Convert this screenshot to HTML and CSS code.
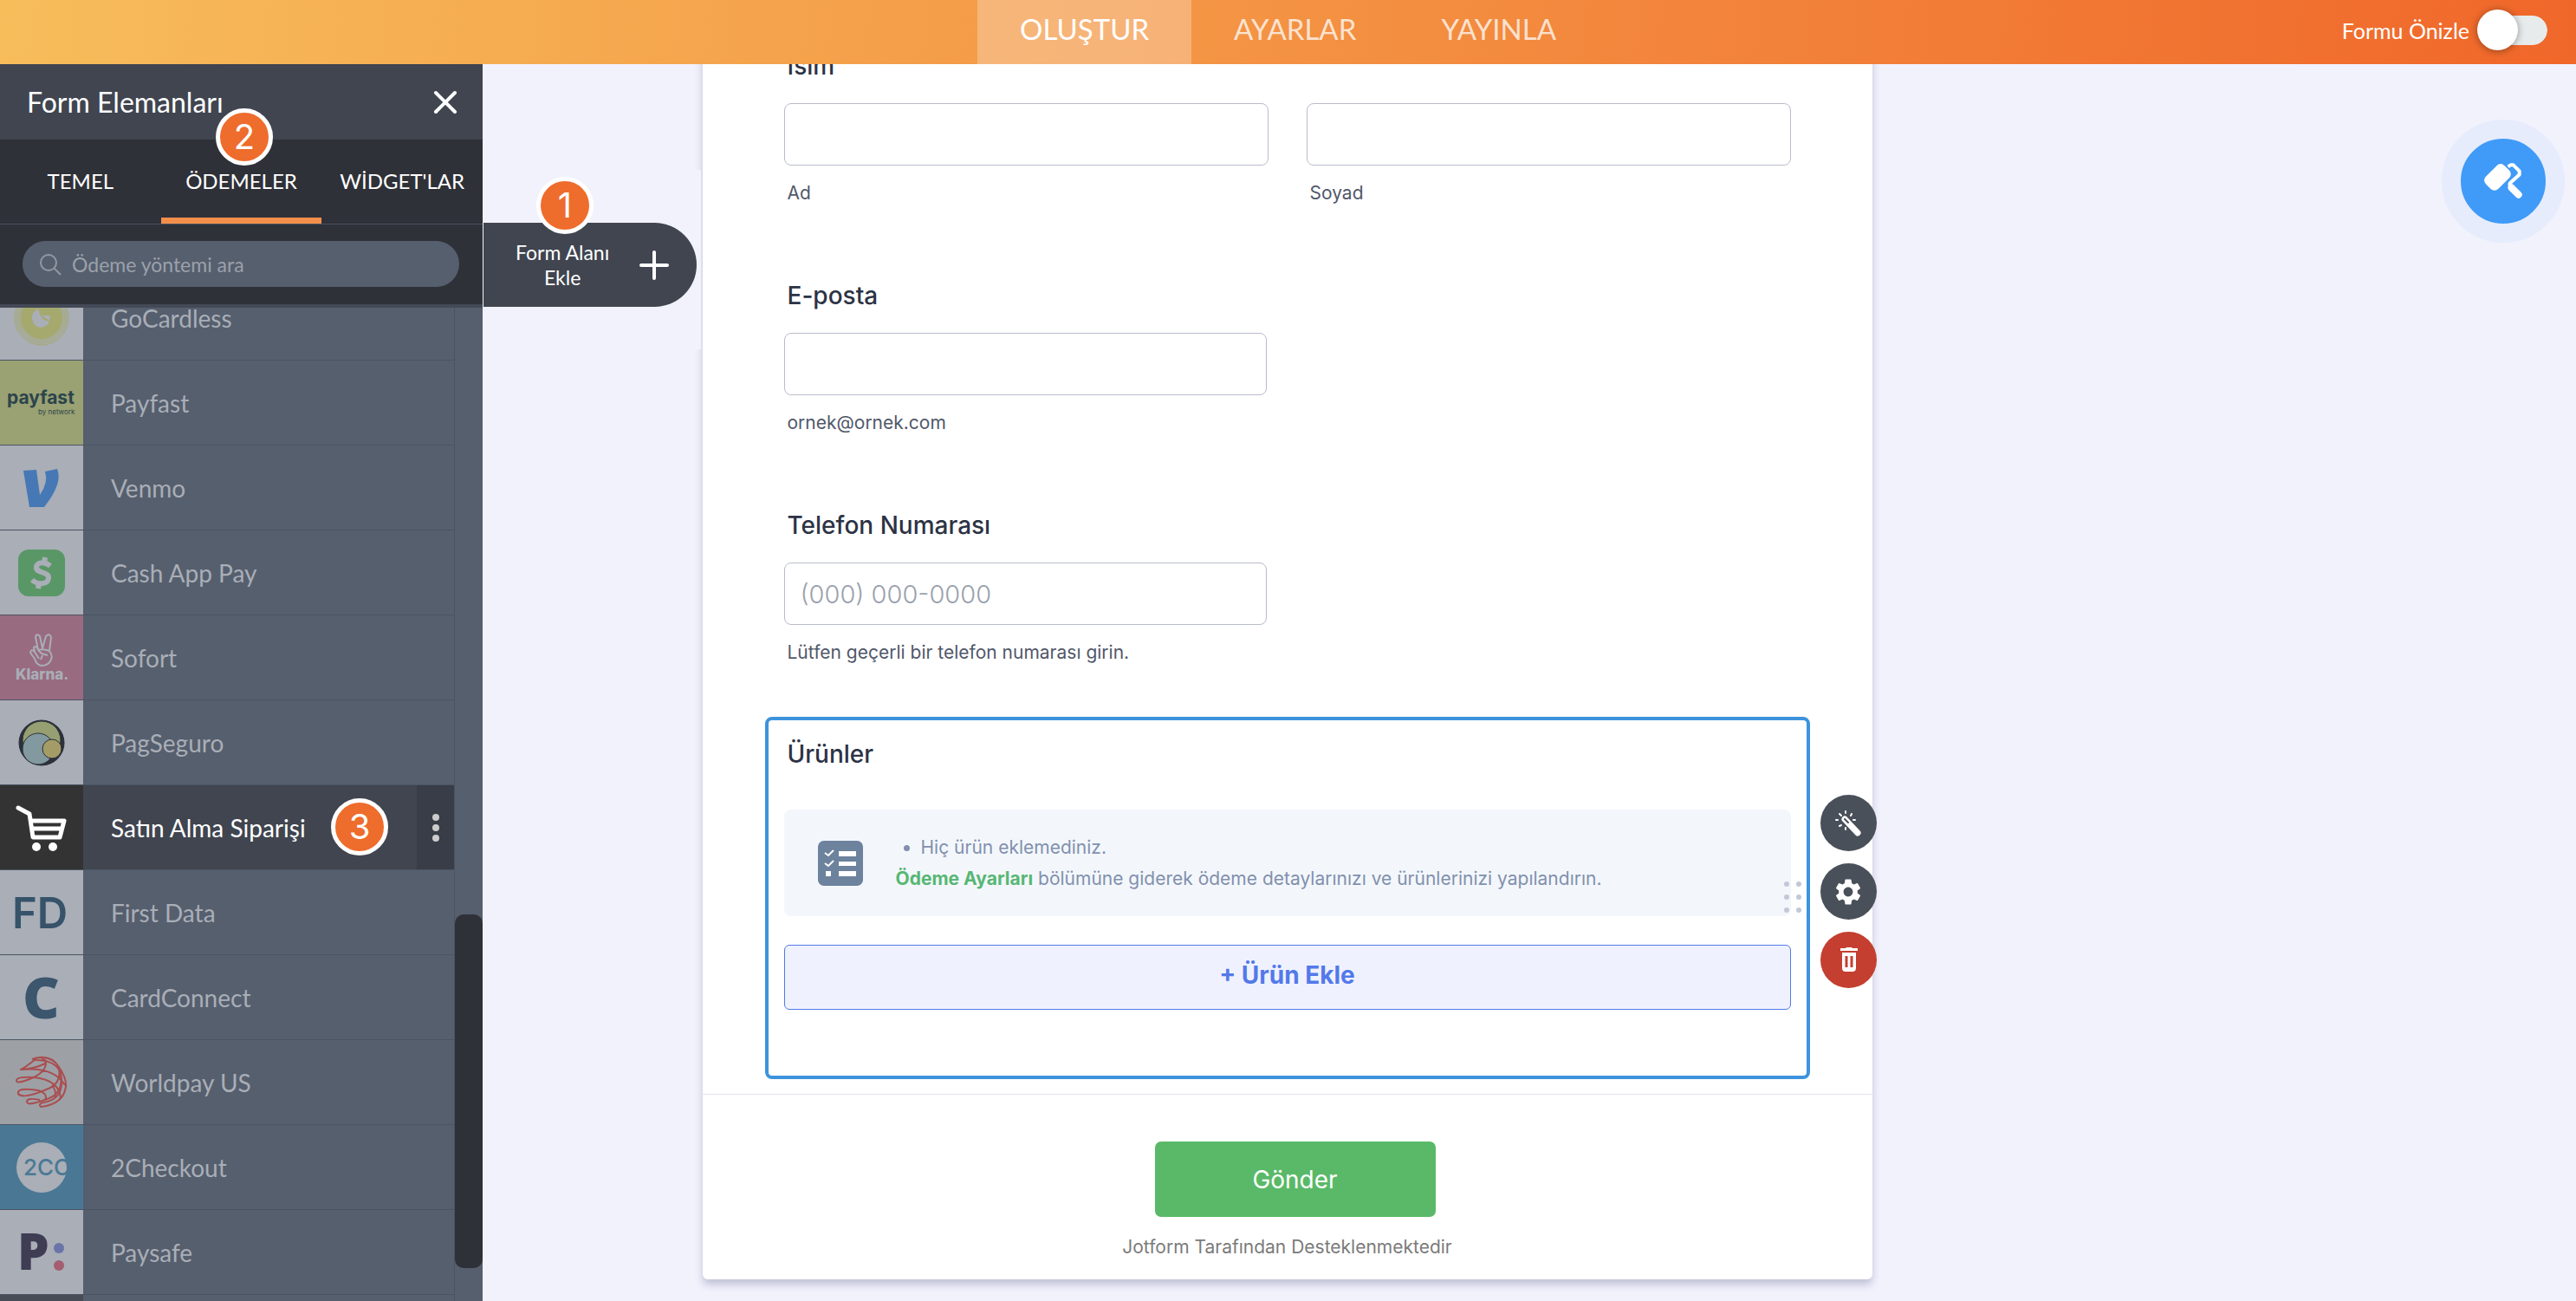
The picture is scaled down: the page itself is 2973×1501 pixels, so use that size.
FILE: index.html
```html
<!DOCTYPE html>
<html lang="tr">

<head>
    <meta charset="UTF-8">
    <meta name="viewport" content="width=device-width, initial-scale=1.0">
    <title>Form Oluşturucu</title>
    <link rel="stylesheet" href="styles.css">
</head>

<body>
    <!-- Top bar -->
    <header class="topbar">
        <nav class="topbar-nav">
            <a href="#" class="active">OLUŞTUR</a>
            <a href="#">AYARLAR</a>
            <a href="#">YAYINLA</a>
        </nav>
        <div class="preview">
            <label for="preview">Formu Önizle</label>
            <input type="checkbox" id="preview" class="toggle">
        </div>
    </header>

    <div class="builder">
        <!-- Form elements panel -->
        <aside class="panel">
            <div class="panel-header">
                <h2>Form Elemanları</h2>
                <button class="close" aria-label="Kapat">
                    <svg width="28" height="28" viewBox="0 0 28 28"><path d="M3 3L25 25M25 3L3 25" stroke="#fff" stroke-width="4" stroke-linecap="round"/></svg>
                </button>
            </div>
            <div class="panel-tabs">
                <button>TEMEL</button>
                <button class="active">ÖDEMELER</button>
                <button>WİDGET'LAR</button>
                <span class="step step-2">2</span>
            </div>
            <div class="search">
                <div class="search-box">
                    <svg width="26" height="26" viewBox="0 0 26 26" fill="none" stroke="#9298a3" stroke-width="2"><circle cx="11" cy="11" r="9"/><path d="M18 18L25 25"/></svg>
                    <input type="text" aria-label="Ödeme yöntemi ara" placeholder="Ödeme yöntemi ara">
                </div>
            </div>

            <div class="list-wrap">
                <ul class="list">
                    <li>
                        <button class="item">
                            <span class="tile">
                                <svg viewBox="0 0 96 97">
                                    <g fill="none" stroke="#a5a970"><circle cx="48" cy="49" r="25"/><circle cx="48" cy="49" r="27"/><circle cx="48" cy="49" r="29"/><circle cx="48" cy="49" r="31"/></g>
                                    <circle cx="48" cy="49" r="24" fill="#a5a96d"/>
                                    <path d="M44 38Q36 42 37 50Q39 60 48 60Q58 58 58 46H48L57 52Q48 54 44 38Z" fill="#a9aeb7"/>
                                </svg>
                            </span>
                            GoCardless
                        </button>
                    </li>
                    <li>
                        <button class="item">
                            <span class="tile lime">
                                <svg viewBox="0 0 96 97" class="logo-text">
                                    <text x="8" y="50" font-size="21" font-weight="700" fill="#2c454c">payfast</text>
                                    <text x="44" y="62" font-size="8" fill="#2c454c">by network</text>
                                </svg>
                            </span>
                            Payfast
                        </button>
                    </li>
                    <li>
                        <button class="item">
                            <span class="tile">
                                <svg viewBox="0 0 96 97"><path d="M27 29L42 28L46 57Q56 43 52 30L66 27Q73 43 51 71H34Z" fill="#4678b5"/></svg>
                            </span>
                            Venmo
                        </button>
                    </li>
                    <li>
                        <button class="item">
                            <span class="tile">
                                <svg viewBox="0 0 96 97">
                                    <rect x="21" y="22" width="54" height="54" rx="12" fill="#5a9767"/>
                                    <path d="M58 41C52 36 43 36 42 42C41 50 57 47 56 55C55 63 43 63 37 57" fill="none" stroke="#a9aeb7" stroke-width="6"/>
                                    <path d="M52 31L51 38M45 60L44 67" stroke="#a9aeb7" stroke-width="6"/>
                                </svg>
                            </span>
                            Cash App Pay
                        </button>
                    </li>
                    <li>
                        <button class="item">
                            <span class="tile pink">
                                <svg viewBox="0 0 96 97" class="logo-text">
                                    <path d="M44 40L41 25Q42 20 46 24L49 38L53 24Q57 20 59 25L57 41M44 40Q50 38 57 41Q61 46 59 51Q56 58 48 58Q42 57 40 50L35 43Q36 38 40 42L45 50M40 42L39 37Q42 34 44 40M44 40L48 44L55 46M49 46L47 51" fill="none" stroke="#a9aeb7" stroke-width="2" stroke-linejoin="round"/>
                                    <text x="18" y="74" font-size="17" font-weight="800" fill="#a9aeb7">Klarna.</text>
                                </svg>
                            </span>
                            Sofort
                        </button>
                    </li>
                    <li>
                        <button class="item">
                            <span class="tile">
                                <svg viewBox="0 0 96 97" stroke="#2b303b">
                                    <circle cx="48" cy="49" r="26" fill="#2b303b"/>
                                    <circle cx="48" cy="46" r="22" fill="#969f71"/>
                                    <circle cx="44" cy="56" r="18" fill="#82999f"/>
                                    <circle cx="60" cy="56" r="11" fill="#a49c66"/>
                                </svg>
                            </span>
                            PagSeguro
                        </button>
                    </li>
                    <li class="selected">
                        <button class="item">
                            <span class="tile">
                                <svg viewBox="0 0 96 97" fill="none" stroke="#fff" stroke-width="5" stroke-linecap="round" stroke-linejoin="round">
                                    <path d="M21 26L34 33L38 60H69L74 41H37M39 50H70"/>
                                    <circle cx="42" cy="71" r="5" fill="#fff" stroke="none"/><circle cx="61" cy="71" r="5" fill="#fff" stroke="none"/>
                                </svg>
                            </span>
                            Satın Alma Siparişi
                        </button>
                        <span class="step step-3">3</span>
                        <button class="more" aria-label="Diğer">
                            <svg width="10" height="34" viewBox="0 0 10 34" fill="#ccc"><circle cx="5" cy="5" r="4"/><circle cx="5" cy="17" r="4"/><circle cx="5" cy="29" r="4"/></svg>
                        </button>
                    </li>
                    <li>
                        <button class="item">
                            <span class="tile">
                                <svg viewBox="0 0 96 97" class="logo-text"><text x="14" y="67" font-size="49" font-weight="600" fill="#36536a">FD</text></svg>
                            </span>
                            First Data
                        </button>
                    </li>
                    <li>
                        <button class="item">
                            <span class="tile">
                                <svg viewBox="0 0 96 97" class="logo-heavy"><text x="26" y="73" font-size="66" font-weight="800" fill="#3b566d">C</text></svg>
                            </span>
                            CardConnect
                        </button>
                    </li>
                    <li>
                        <button class="item">
                            <span class="tile gray">
                                <svg viewBox="0 0 96 97" fill="none" stroke="#a94f51" stroke-width="2" stroke-linejoin="round">
                                    <path d="M37 22Q58 15 68 31Q77 44 76 54Q73 74 47 77Q44 73 50 72Q76 68 70 38Q64 22 38 23"/>
                                    <path d="M41 22Q30 31 24 34Q40 33 52 27Q55 22 48 22M53 26Q53 36 39 43Q18 52 19 46Q20 42 39 43M39 43Q69 46 70 68M24 34Q62 30 75 52M68 33Q71 48 58 55Q27 69 21 62Q19 54 44 58M44 58Q56 62 52 69M70 40Q73 60 57 67Q31 77 31 71Q31 66 46 69M60 52Q66 60 63 66"/>
                                </svg>
                            </span>
                            Worldpay US
                        </button>
                    </li>
                    <li>
                        <button class="item">
                            <span class="tile blue">
                                <svg viewBox="0 0 96 97" class="logo-text">
                                    <circle cx="48" cy="49" r="29" fill="#a9aeb7"/>
                                    <text x="27" y="58" font-size="26" font-weight="500" fill="#4a7894">2CO</text>
                                </svg>
                            </span>
                            2Checkout
                        </button>
                    </li>
                    <li>
                        <button class="item">
                            <span class="tile">
                                <svg viewBox="0 0 96 97" class="logo-heavy">
                                    <text x="20" y="69" font-size="58" font-weight="800" fill="#3e3d54">P</text>
                                    <circle cx="68" cy="44" r="6" fill="#6a74a8"/><circle cx="68" cy="64" r="6" fill="#a55d70"/>
                                </svg>
                            </span>
                            Paysafe
                        </button>
                    </li>
                    <li><button class="item" aria-label="Sonraki"><span class="tile dark"></span></button></li>
                </ul>
                <div class="scrollbar"><div class="thumb"></div></div>
            </div>

            <!-- Opens the panel, hangs over the canvas -->
            <div class="add-field">
                <button>
                    <span>Form Alanı<br>Ekle</span>
                    <svg width="36" height="36" viewBox="0 0 36 36"><path d="M18 3V33M3 18H33" stroke="#fff" stroke-width="4" stroke-linecap="round"/></svg>
                </button>
                <span class="step step-1">1</span>
            </div>
        </aside>

        <!-- Form being edited -->
        <main class="canvas">
            <form class="form">
                <div class="fields">
                    <fieldset class="field">
                        <legend>İsim</legend>
                        <div class="name-row">
                            <div><input type="text" id="first"><label class="hint" for="first">Ad</label></div>
                            <div><input type="text" id="last"><label class="hint" for="last">Soyad</label></div>
                        </div>
                    </fieldset>
                    <div class="field half">
                        <label for="email">E-posta</label>
                        <input type="email" id="email">
                        <span class="hint">ornek@ornek.com</span>
                    </div>
                    <div class="field half">
                        <label for="phone">Telefon Numarası</label>
                        <input type="tel" id="phone" placeholder="(000) 000-0000">
                        <span class="hint">Lütfen geçerli bir telefon numarası girin.</span>
                    </div>

                    <section class="products">
                        <h3>Ürünler</h3>
                        <div class="notice">
                            <svg width="52" height="52" viewBox="0 0 52 52">
                                <rect width="52" height="52" rx="7" fill="#6c829d"/>
                                <path d="M24 12H44V18H24ZM24 24H44V29H24ZM24 35H44V41H24ZM9 35H15V41H9Z" fill="#fff"/>
                                <path d="M8 14L12 17L18 11M8 26L12 29L18 23" fill="none" stroke="#fff" stroke-width="2"/>
                            </svg>
                            <div>
                                <ul><li>Hiç ürün eklemediniz.</li></ul>
                                <p><a href="#">Ödeme Ayarları</a> bölümüne giderek ödeme detaylarınızı ve ürünlerinizi yapılandırın.</p>
                            </div>
                        </div>
                        <button type="button" class="add-product">+ Ürün Ekle</button>

                        <svg class="drag" width="20" height="36" viewBox="0 0 20 36" fill="#c3c8d8"><circle cx="3" cy="3" r="3"/><circle cx="17" cy="3" r="3"/><circle cx="3" cy="18" r="3"/><circle cx="17" cy="18" r="3"/><circle cx="3" cy="33" r="3"/><circle cx="17" cy="33" r="3"/></svg>
                        <div class="tools">
                            <button type="button" aria-label="Sihirbaz">
                                <svg viewBox="0 0 65 65" fill="none" stroke-linecap="round">
                                    <path d="M28 28L43 44" stroke="#fff" stroke-width="7"/>
                                    <path d="M28 28L32 32" stroke="#4a5059" stroke-width="2"/>
                                    <path d="M29 19V21M18 29H20M38 29H40M22 22L24 24M36 22L35 24M22 36L24 35M29 38V40" stroke="#fff" stroke-width="2"/>
                                </svg>
                            </button>
                            <button type="button" aria-label="Ayarlar">
                                <svg class="gear" viewBox="0 0 24 24" fill="#fff"><path d="M19.14 12.94c.04-.3.06-.61.06-.94s-.02-.64-.07-.94l2.03-1.58c.18-.14.23-.41.12-.61l-1.92-3.32c-.12-.22-.37-.29-.59-.22l-2.39.96c-.5-.38-1.03-.7-1.62-.94l-.36-2.54c-.04-.24-.24-.41-.48-.41h-3.84c-.24 0-.43.17-.47.41l-.36 2.54c-.59.24-1.13.57-1.62.94l-2.39-.96c-.22-.08-.47 0-.59.22L2.74 8.87c-.12.21-.08.47.12.61l2.03 1.58c-.05.3-.09.63-.09.94s.02.64.07.94l-2.03 1.58c-.18.14-.23.41-.12.61l1.92 3.32c.12.22.37.29.59.22l2.39-.96c.5.38 1.03.7 1.62.94l.36 2.54c.05.24.24.41.48.41h3.84c.24 0 .44-.17.47-.41l.36-2.54c.59-.24 1.13-.56 1.62-.94l2.39.96c.22.08.47 0 .59-.22l1.92-3.32c.12-.22.07-.47-.12-.61l-2.01-1.58zM12 15.6c-1.98 0-3.6-1.62-3.6-3.6s1.62-3.6 3.6-3.6 3.6 1.62 3.6 3.6-1.62 3.6-3.6 3.6z"/></svg>
                            </button>
                            <button type="button" class="delete" aria-label="Sil">
                                <svg viewBox="0 0 65 65"><path d="M23 19H29L30 18H36L37 19H43V22H23ZM25 24H41V42Q41 46 37 46H29Q25 46 25 42Z" fill="#fff"/><path d="M30 28V41M36 28V41" stroke="#c43f30" stroke-width="3"/></svg>
                            </button>
                        </div>
                    </section>
                </div>

                <div class="form-footer">
                    <button type="submit" class="submit">Gönder</button>
                    <p>Jotform Tarafından Desteklenmektedir</p>
                </div>
            </form>
        </main>

        <!-- Form designer button -->
        <div class="designer">
            <button aria-label="Form Tasarımcısı">
                <svg viewBox="0 0 97 97">
                    <rect x="27" y="34" width="30" height="20" rx="6" transform="rotate(-45 42 44)" fill="#fff"/>
                    <path d="M54 32L57 30L60 30L67 37V41L56 51V55" fill="none" stroke="#fff" stroke-width="4" stroke-linejoin="round"/>
                    <path d="M58 56L66 64" stroke="#fff" stroke-width="8" stroke-linecap="round"/>
                </svg>
            </button>
        </div>
    </div>
</body>

</html>
```
FILE: styles.css
```css
* {
    box-sizing: border-box;
}

/* General page styling */
body {
    margin: 0;
    height: 100vh;
    display: flex;
    flex-direction: column;
    overflow: hidden;
    background-color: #f2f2fd;
    font-family: Inter, sans-serif;
    font-size: 21px;
    font-optical-sizing: none;
    color: #2c3345;
}

button {
    font: inherit;
    font-optical-sizing: none;
    color: inherit;
    background: none;
    border: none;
    padding: 0;
    cursor: pointer;
}

svg {
    display: block;
}

/* Top bar */
.topbar {
    position: relative;
    z-index: 2;
    flex: none;
    height: 74px;
    display: grid;
    grid-template-columns: 1fr auto 1fr;
    background: linear-gradient(95deg, #f7bd5b, #f0672a);
    color: #fff;
    font-family: Lato, sans-serif;
}

.topbar-nav {
    grid-column: 2;
    display: flex;
}

.topbar-nav a {
    padding: 0 49px;
    font-size: 33px;
    line-height: 66px;
    color: rgba(255, 255, 255, 0.75);
    text-decoration: none;
}

.topbar-nav .active {
    background-color: rgba(255, 255, 255, 0.27);
    color: #fff;
}

.preview {
    display: flex;
    align-items: center;
    justify-content: flex-end;
    gap: 9px;
    padding: 0 33px 4px 0;
    font-size: 25px;
}

/* Switch with a knob larger than its track */
.toggle {
    appearance: none;
    position: relative;
    width: 81px;
    height: 34px;
    margin: 0;
    border-left: 11px solid transparent;
    border-radius: 17px;
    background: #e8ebec padding-box;
}

.toggle::before {
    content: "";
    position: absolute;
    left: -11px;
    top: -7px;
    width: 47px;
    height: 47px;
    border-radius: 50%;
    background-color: #fff;
    box-shadow: 0 1px 8px rgba(0, 0, 0, 0.4);
}

/* Three columns, the form sits in the middle one */
.builder {
    flex: 1;
    min-height: 0;
    display: grid;
    grid-template-columns: 557px minmax(0, 1fr) 559px;
    grid-template-rows: minmax(0, 1fr);
}

/* Left panel */
.panel {
    position: relative;
    z-index: 1;
    display: flex;
    flex-direction: column;
    background-color: #2f3138;
    color: #fff;
    font-family: Lato, sans-serif;
}

.panel-header {
    flex: none;
    height: 87px;
    display: flex;
    align-items: center;
    justify-content: space-between;
    padding: 0 29px 0 31px;
    background-color: #404550;
}

.panel-header h2 {
    margin: 0;
    font-size: 32px;
    font-weight: 400;
}

.panel-tabs {
    position: relative;
    flex: none;
    height: 98px;
    display: grid;
    grid-template-columns: repeat(3, 1fr);
    border-bottom: 1px solid #4b5362;
    font-size: 24px;
}

.panel-tabs button {
    padding-bottom: 2px;
    border-top: 7px solid transparent;
    border-bottom: 7px solid transparent;
}

.panel-tabs .active {
    border-bottom-color: #f48f4b;
}

.search {
    flex: none;
    padding: 19px 27px 20px 26px;
    border-bottom: 4px solid #444957;
}

.search-box {
    display: flex;
    align-items: center;
    gap: 12px;
    height: 53px;
    padding: 0 19px;
    border-radius: 27px;
    background-color: #565f6e;
}

.search-box input {
    flex: 1;
    min-width: 0;
    padding: 0;
    border: none;
    outline: none;
    background: none;
    color: #fff;
    font: 23px Lato, sans-serif;
}

.search-box input::placeholder {
    color: #9ba1ab;
}

/* Payment list */
.list-wrap {
    flex: 1;
    min-height: 0;
    display: flex;
    overflow: hidden;
    background-color: #565f6e;
}

.list {
    flex: 1;
    margin: -37px 0 0;
    padding: 0;
    list-style: none;
    border-right: 1px solid #4b5463;
}

.list li {
    position: relative;
    display: flex;
    height: 98px;
    border-bottom: 1px solid #4b5463;
}

.item {
    flex: 1;
    display: flex;
    align-items: center;
    gap: 32px;
    color: #a9aeb7;
    font-size: 28px;
    text-align: left;
}

.tile {
    width: 96px;
    height: 97px;
    background-color: #a9aeb7;
}

.tile.lime { background-color: #9aa173; }
.tile.pink { background-color: #996b80; }
.tile.gray { background-color: #9da1a6; }
.tile.blue { background-color: #4a7894; }
.tile.dark { background-color: #474c57; }

.logo-text {
    font-family: Inter, sans-serif;
}

.logo-heavy {
    font-family: "Open Sans", sans-serif;
}

.selected {
    background-color: #404550;
}

.selected .item {
    color: #fff;
}

.selected .tile {
    background-color: #333;
}

.more {
    width: 43px;
    display: flex;
    align-items: center;
    justify-content: center;
    background-color: #383d47;
}

.scrollbar {
    width: 32px;
    padding-top: 700px;
}

.thumb {
    height: 408px;
    border-radius: 10px;
    background-color: #2f3138;
}

/* Numbered step badges, drawn over the controls */
.step {
    position: absolute;
    width: 66px;
    height: 66px;
    border: 5px solid #fff;
    border-radius: 50%;
    background-color: #ee6c2c;
    color: #fff;
    font: 40px/56px Inter, sans-serif;
    text-align: center;
}

.step-1 { left: 62px; top: 8px; }
.step-2 { left: 249px; top: -36px; }
.step-3 { left: 382px; top: 15px; }

.add-field {
    position: absolute;
    left: 100%;
    top: 122px;
    padding: 61px 5px 49px 1px;
    background-color: #f2f2fd;
}

.add-field button {
    display: flex;
    align-items: center;
    gap: 34px;
    height: 97px;
    padding: 0 31px 0 37px;
    border-radius: 0 49px 49px 0;
    background-color: #404550;
    color: #fff;
    font-size: 23px;
    line-height: 29px;
    white-space: nowrap;
}

.add-field svg {
    flex: none;
}

/* Form card */
.canvas {
    display: flex;
    justify-content: center;
    align-items: flex-start;
    padding: 0 16px;
}

.form {
    width: 100%;
    max-width: 1350px;
    margin-top: -40px;
    border-radius: 6px;
    background-color: #fff;
    box-shadow: 0 6px 10px rgba(44, 51, 100, 0.25);
}

.fields {
    padding: 25px 94px 17px;
}

.field {
    display: flex;
    flex-direction: column;
    margin: 0 0 87px;
    padding: 0;
    border: none;
}

.field > label,
.field > legend,
.products h3 {
    margin: 0 0 26px;
    padding: 0 4px;
    font-size: 28px;
    font-weight: 500;
    line-height: 34px;
}

.field input {
    width: 100%;
    height: 72px;
    padding: 0 18px;
    border: 1px solid #b9bdcb;
    border-radius: 8px;
    background-color: #fff;
    font: 300 29px Inter, sans-serif;
}

.field input::placeholder {
    color: #9aa1ae;
}

.half input {
    width: 48%;
}

.hint {
    display: block;
    margin-top: 18px;
    padding: 0 4px;
    line-height: 28px;
    color: #51586a;
}

.name-row {
    display: grid;
    grid-template-columns: 1fr 1fr;
    gap: 44px;
}

/* Selected products block */
.products {
    position: relative;
    margin: -27px -22px 0;
    padding: 22px 18px 76px;
    border: 4px solid #3d93dd;
    border-radius: 8px;
}

.notice {
    display: flex;
    align-items: center;
    gap: 38px;
    margin: 47px 0 33px;
    padding: 26px 39px 25px;
    border-radius: 8px;
    background-color: #f3f7fc;
    color: #8290ad;
    line-height: 36px;
}

.notice ul,
.notice p {
    margin: 0;
}

.notice ul {
    padding-left: 29px;
}

.notice a {
    color: #57b773;
    font-weight: 700;
    text-decoration: none;
}

.add-product {
    width: 100%;
    height: 75px;
    padding-bottom: 5px;
    border: 1px solid #5379ea;
    border-radius: 6px;
    background-color: #eff2fe;
    color: #5379ea;
    font-size: 28px;
    font-weight: 700;
}

.drag {
    position: absolute;
    right: 6px;
    top: 186px;
}

.tools {
    position: absolute;
    left: calc(100% + 16px);
    top: 86px;
    display: flex;
    flex-direction: column;
    gap: 14px;
}

.tools button {
    display: flex;
    align-items: center;
    justify-content: center;
    width: 65px;
    height: 65px;
    border-radius: 50%;
    background-color: #4a5059;
}

.tools .delete {
    background-color: #c43f30;
}

.tools svg {
    width: 65px;
}

.tools .gear {
    width: 36px;
}

/* Submit area */
.form-footer {
    display: flex;
    flex-direction: column;
    align-items: center;
    padding: 54px 0 23px;
    border-top: 1px solid #e3e4ee;
}

.submit {
    width: 324px;
    height: 87px;
    margin-left: 18px;
    border-radius: 7px;
    background-color: #59b968;
    color: #fff;
    font-size: 28px;
}

.form-footer p {
    margin: 21px 0 0;
    line-height: 28px;
    color: #7b7b7b;
}

/* Designer button in the right column */
.designer {
    display: flex;
    justify-content: flex-end;
    align-items: flex-start;
    padding: 64px 13px;
}

.designer button {
    width: 142px;
    height: 142px;
    border: 22px solid #e6ecfc;
    border-radius: 50%;
    background-color: #409af7;
}
```
